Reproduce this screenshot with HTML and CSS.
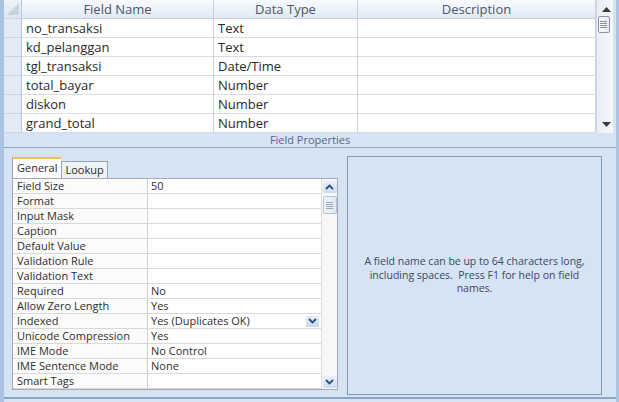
FILE: index.html
```html
<!DOCTYPE html>
<html lang="en">
<head>
  <meta charset="UTF-8">
  <title>Table Design</title>
  <link rel="stylesheet" href="styles.css">
</head>
<body>

  <div class="window">

    <div class="design">
      <div class="fields">
        <div class="sel corner">
          <svg width="12" height="12" viewBox="0 0 12 12"><polygon points="12,0 12,12 0,12" fill="#c9d3df"/></svg>
        </div>
        <div class="hd">Field Name</div>
        <div class="hd">Data Type</div>
        <div class="hd">Description</div>

        <div class="sel"></div><div class="cell">no_transaksi</div><div class="cell">Text</div><div class="cell"></div>
        <div class="sel"></div><div class="cell">kd_pelanggan</div><div class="cell">Text</div><div class="cell"></div>
        <div class="sel"></div><div class="cell">tgl_transaksi</div><div class="cell">Date/Time</div><div class="cell"></div>
        <div class="sel"></div><div class="cell">total_bayar</div><div class="cell">Number</div><div class="cell"></div>
        <div class="sel"></div><div class="cell">diskon</div><div class="cell">Number</div><div class="cell"></div>
        <div class="sel"></div><div class="cell">grand_total</div><div class="cell">Number</div><div class="cell"></div>
      </div>

      <div class="vscroll">
        <svg class="arrow" width="9" height="5" viewBox="0 0 9 5"><polygon points="0,5 4.5,0 9,5" fill="#3a3a3a"/></svg>
        <div class="thumb">
          <svg width="7" height="7" viewBox="0 0 7 7"><path d="M0 0.5H7M0 2.5H7M0 4.5H7M0 6.5H7" stroke="#8a9099" stroke-width="1"/></svg>
        </div>
        <div class="track"></div>
        <svg class="arrow" width="9" height="5" viewBox="0 0 9 5"><polygon points="0,0 9,0 4.5,5" fill="#3a3a3a"/></svg>
      </div>
    </div>

    <div class="section-bar">Field Properties</div>

    <div class="pane">
      <div class="props">
        <div class="tabs">
          <span class="tab active">General</span>
          <span class="tab">Lookup</span>
        </div>

        <div class="prop-box">
          <div class="prop-grid">
            <div class="lbl">Field Size</div><div class="val">50</div>
            <div class="lbl">Format</div><div class="val"></div>
            <div class="lbl">Input Mask</div><div class="val"></div>
            <div class="lbl">Caption</div><div class="val"></div>
            <div class="lbl">Default Value</div><div class="val"></div>
            <div class="lbl">Validation Rule</div><div class="val"></div>
            <div class="lbl">Validation Text</div><div class="val"></div>
            <div class="lbl">Required</div><div class="val">No</div>
            <div class="lbl">Allow Zero Length</div><div class="val">Yes</div>
            <div class="lbl">Indexed</div>
            <div class="val combo">
              <span>Yes (Duplicates OK)</span>
              <span class="drop">
                <svg width="9" height="6" viewBox="0 0 9 6"><path d="M1 1L4.5 4.5L8 1" fill="none" stroke="#2d4b7c" stroke-width="1.8"/></svg>
              </span>
            </div>
            <div class="lbl">Unicode Compression</div><div class="val">Yes</div>
            <div class="lbl">IME Mode</div><div class="val">No Control</div>
            <div class="lbl">IME Sentence Mode</div><div class="val">None</div>
            <div class="lbl">Smart Tags</div><div class="val"></div>
          </div>

          <div class="pscroll">
            <span class="btn">
              <svg width="9" height="6" viewBox="0 0 9 6"><path d="M1 5L4.5 1.5L8 5" fill="none" stroke="#2d4b7c" stroke-width="1.8"/></svg>
            </span>
            <span class="pthumb">
              <svg width="7" height="7" viewBox="0 0 7 7"><path d="M0 0.5H7M0 2.5H7M0 4.5H7M0 6.5H7" stroke="#9aa6b6" stroke-width="1"/></svg>
            </span>
            <span class="ptrack"></span>
            <span class="btn">
              <svg width="9" height="6" viewBox="0 0 9 6"><path d="M1 1L4.5 4.5L8 1" fill="none" stroke="#2d4b7c" stroke-width="1.8"/></svg>
            </span>
          </div>
        </div>
      </div>

      <div class="help">
        <p>A field name can be up to 64 characters long, including spaces.&nbsp; Press F1 for help on field names.</p>
      </div>
    </div>

  </div>

</body>
</html>
```

FILE: styles.css
```css
body {
  margin: 0;
  background: #d6e3f3;
  font-family: 'Open Sans', 'Noto Sans', sans-serif;
}

.window {
  width: 619px;
  height: 402px;
  box-sizing: border-box;
  background: #d6e3f3;
  border-left: 4px solid #aac3e2;
  border-right: 3px solid #aac3e2;
  overflow: hidden;
}

/* upper grid with the field list */

.design {
  display: flex;
  height: 133px;
}

.fields {
  display: grid;
  grid-template-columns: 18px 192px 144px 238px;
  grid-auto-rows: 19px;
  background: #fff;
}

.fields > div {
  box-sizing: border-box;
  border-right: 1px solid #c9d2de;
  border-bottom: 1px solid #d7dce3;
}

.hd {
  background: linear-gradient(#f9fbfe, #e0e9f4);
  color: #4a586c;
  font-size: 13px;
  line-height: 18px;
  text-align: center;
  border-bottom-color: #c3d0e1 !important;
}

.sel {
  background: #e2eaf4;
  border-bottom-color: #c9d5e4 !important;
  border-right-color: #b7c6da !important;
}

.corner {
  background: linear-gradient(#eef3fa, #dbe5f1);
  display: flex;
  align-items: flex-end;
  justify-content: flex-end;
  padding: 0 2px 3px 0;
}

.corner svg {
  display: block;
}

.cell {
  color: #2a2a2a;
  font-size: 13px;
  line-height: 18px;
  padding-left: 4px;
  white-space: nowrap;
}

.vscroll {
  width: 17px;
  background: linear-gradient(90deg, #e9eef5, #f6f8fb);
  border-left: 1px solid #d2dae5;
  display: flex;
  flex-direction: column;
  align-items: center;
  padding: 7px 0 6px;
  box-sizing: border-box;
}

.vscroll .arrow {
  display: block;
  margin-left: 2px;
}

.thumb {
  width: 10px;
  height: 15px;
  margin-top: 4px;
  border: 1px solid #8c939e;
  border-radius: 2px;
  background: linear-gradient(90deg, #fafbfc, #e4e8ee);
  display: flex;
  align-items: center;
  justify-content: center;
  margin-right: 3px;
}

.thumb svg {
  display: block;
}

.track {
  flex: 1;
}

/* properties band */

.section-bar {
  height: 14px;
  line-height: 14px;
  font-size: 11px;
  color: #56698a;
  text-align: center;
  background: #d6e3f3;
  border-bottom: 1px solid #8ea7c7;
}

.pane {
  display: flex;
  padding: 8px 0 0 8px;
  height: 251px;
  box-sizing: border-box;
  border-bottom: 2px solid #8ba5c6;
}

.props {
  width: 326px;
  padding-top: 1px;
}

.tabs {
  display: flex;
  align-items: flex-end;
  height: 21px;
}

.tab {
  box-sizing: border-box;
  height: 17px;
  padding: 0 3px;
  font-size: 11px;
  line-height: 16px;
  color: #2b2b2b;
  background: #eef1f5;
  border: 1px solid #98a4b4;
  border-bottom: none;
}

.tab.active {
  height: 21px;
  padding: 0 4px;
  line-height: 18px;
  background: #fdfdfd;
  border-top: 2px solid #f2bb5c;
  border-right: none;
}

.prop-box {
  display: flex;
  height: 212px;
  box-sizing: border-box;
  border: 1px solid #a3aab4;
  background: #fff;
}

.prop-grid {
  display: grid;
  grid-template-columns: 135px 173px;
  grid-auto-rows: 15px;
  align-content: start;
}

.prop-grid > div {
  box-sizing: border-box;
  border-bottom: 1px solid #d9d9d9;
  font-size: 11px;
  line-height: 14px;
  color: #2e2e2e;
  white-space: nowrap;
}

.lbl {
  padding-left: 4px;
  background: #fbfbf9;
  border-right: 1px solid #cdcdcd;
}

.val {
  padding-left: 3px;
}

.combo {
  display: flex;
  justify-content: space-between;
  align-items: center;
  padding-right: 2px;
}

.drop {
  width: 13px;
  height: 11px;
  background: linear-gradient(#e6eef8, #c9d8ec);
  display: flex;
  align-items: center;
  justify-content: center;
}

.drop svg,
.btn svg,
.pthumb svg {
  display: block;
}

.pscroll {
  flex: 1;
  display: flex;
  flex-direction: column;
  align-items: center;
  padding: 2px 0 1px;
  background: #f7f7f7;
  border-left: 1px solid #dcdcdc;
}

.btn {
  width: 14px;
  height: 12px;
  background: linear-gradient(#e9f0f9, #cddbed);
  border-radius: 2px;
  display: flex;
  align-items: center;
  justify-content: center;
}

.pthumb {
  width: 12px;
  height: 16px;
  margin-top: 3px;
  border: 1px solid #b4c2d4;
  border-radius: 2px;
  background: linear-gradient(90deg, #f3f6fa, #dfe7f1);
  display: flex;
  align-items: center;
  justify-content: center;
}

.ptrack {
  flex: 1;
}

/* help box on the right */

.help {
  width: 255px;
  height: 239px;
  margin-left: 9px;
  box-sizing: border-box;
  border: 1px solid #7f9bbf;
  display: flex;
  align-items: center;
  justify-content: center;
  padding: 0 8px;
}

.help p {
  margin: 0;
  font-size: 10.5px;
  line-height: 13.5px;
  color: #3a4963;
  text-align: center;
}
```
